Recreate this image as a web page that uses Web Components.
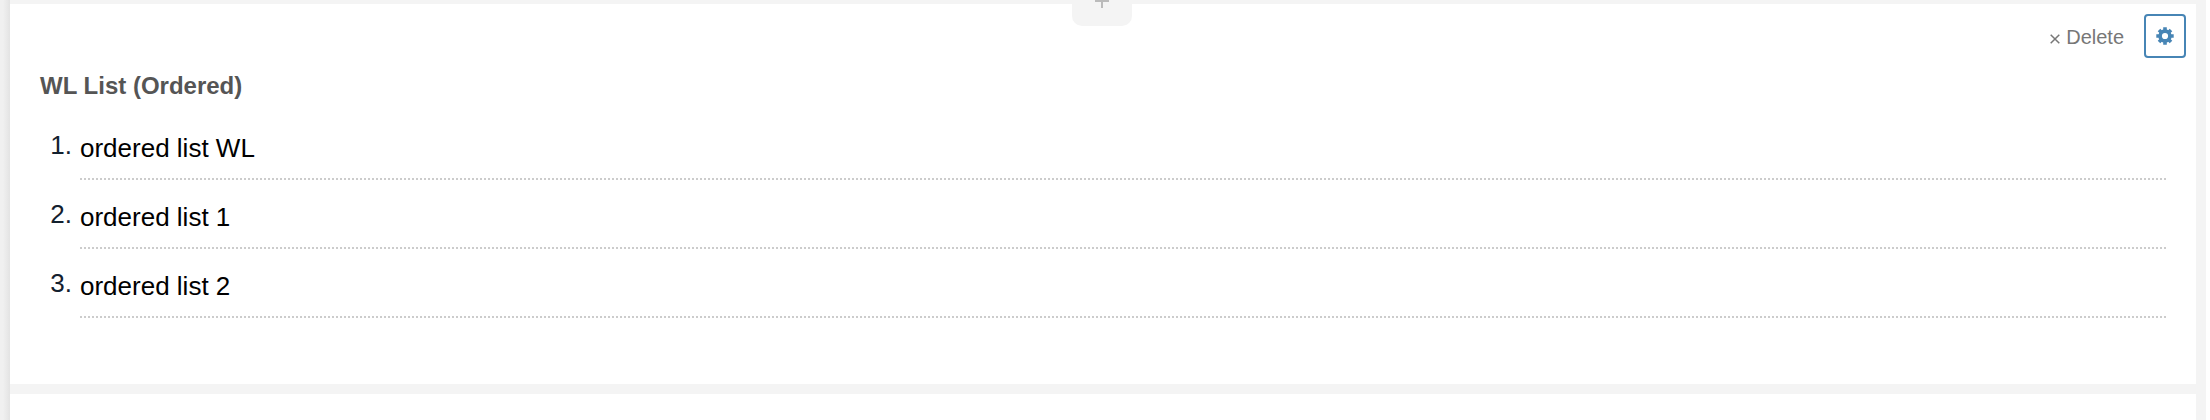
<!DOCTYPE html>
<html lang="en">
<head>
  <meta charset="utf-8">
  <title>WL List</title>
  <style>
    body {
      margin: 0;
      background-color: #fff;
      font-family: "Liberation Sans", Arial, sans-serif;
    }
  </style>
</head>
<body>
  <content-editor>
    <content-block>
      <block-actions slot="actions"></block-actions>
      <ordered-list-field label="WL List (Ordered)">
        <list-entry number="1" value="ordered list WL"></list-entry>
        <list-entry number="2" value="ordered list 1"></list-entry>
        <list-entry number="3" value="ordered list 2"></list-entry>
      </ordered-list-field>
    </content-block>
    <content-block></content-block>
  </content-editor>

  <script>
    class ContentEditor extends HTMLElement {
      static TAG = 'content-editor';

      constructor() {
        super();
        this.attachShadow({ mode: 'open' });
        this.shadowRoot.innerHTML = `
          <style>
            :host {
              display: flex;
              position: relative;
              height: 100vh;
              margin-right: 4px;
              overflow: hidden;
              background-color: #f4f4f4;
            }
            .rail {
              flex: none;
              width: 10px;
              background: linear-gradient(to right, #f0f0f0 30%, #e3e3e3);
            }
            main {
              flex: 1;
              display: flex;
              flex-direction: column;
              gap: 10px;
              padding: 4px 10px 0 0;
            }
            ::slotted(content-block:last-of-type) {
              flex: 1;
            }
            .add {
              position: absolute;
              top: -24px;
              left: calc(50% - 31px);
              display: flex;
              align-items: center;
              justify-content: center;
              width: 60px;
              height: 50px;
              padding: 0;
              border: 0;
              border-radius: 10px;
              background-color: #f4f4f4;
            }
          </style>
          <div class="rail"></div>
          <main><slot></slot></main>
          <button class="add" type="button" aria-label="Add block">
            <svg width="14" height="14" viewBox="0 0 14 14" stroke="#bbb" stroke-width="2">
              <path d="M0 7h14M7 0v14"/>
            </svg>
          </button>
        `;
      }
    }
    customElements.define(ContentEditor.TAG, ContentEditor);

    class ContentBlock extends HTMLElement {
      static TAG = 'content-block';

      constructor() {
        super();
        this.attachShadow({ mode: 'open' });
        this.shadowRoot.innerHTML = `
          <style>
            :host {
              display: block;
              padding: 10px 10px 57px 30px;
              background-color: #fff;
            }
            :host(:empty) {
              padding: 0;
            }
          </style>
          <slot name="actions"></slot>
          <slot></slot>
        `;
      }
    }
    customElements.define(ContentBlock.TAG, ContentBlock);

    class BlockActions extends HTMLElement {
      static TAG = 'block-actions';

      constructor() {
        super();
        this.attachShadow({ mode: 'open' });
        this.shadowRoot.innerHTML = `
          <style>
            :host {
              display: flex;
              align-items: center;
              justify-content: flex-end;
              gap: 20px;
            }
            button {
              display: flex;
              align-items: center;
              justify-content: center;
              box-sizing: border-box;
              padding: 0;
              border: 0;
              background: none;
              font: inherit;
            }
            .delete {
              gap: 6px;
              padding-top: 2px;
              color: #777;
              font-size: 20px;
              line-height: 24px;
            }
            .delete svg {
              margin-top: 4px;
            }
            .settings {
              width: 42px;
              height: 44px;
              border: 2px solid #4785b5;
              border-radius: 4px;
              color: #4785b5;
            }
          </style>
          <button class="delete" type="button">
            <svg width="10" height="10" viewBox="0 0 10 10" stroke="#777" stroke-width="1.5" aria-hidden="true">
              <path d="M.7.7l8.6 8.6M9.3.7L.7 9.3"/>
            </svg>
            Delete
          </button>
          <button class="settings" type="button" aria-label="Settings">
            <svg width="18" height="18" viewBox="-9 -9 18 18" fill="none" stroke="currentColor">
              <circle r="4.900" stroke-width="3.600"/>
              <path stroke-width="3.600" d="M0-8.700V-5M0 8.700V5M-8.700 0H-5M8.700 0H5"/>
              <path stroke-width="3.600" d="M-6-6l2.500 2.500M6-6L3.500-3.500M-6 6l2.500-2.500M6 6L3.500 3.500"/>
            </svg>
          </button>
        `;
      }
    }
    customElements.define(BlockActions.TAG, BlockActions);

    class OrderedListField extends HTMLElement {
      static TAG = 'ordered-list-field';

      constructor() {
        super();
        this.attachShadow({ mode: 'open' });
        this.shadowRoot.innerHTML = `
          <style>
            :host {
              display: block;
              padding: 14px 20px 0 0;
            }
            h2 {
              margin: 0 0 20px;
              color: #555;
              font-size: 24px;
              line-height: 28px;
            }
            .entries {
              display: flex;
              flex-direction: column;
            }
          </style>
          <h2></h2>
          <div class="entries" role="list"><slot></slot></div>
        `;
      }
      connectedCallback() {
        this.shadowRoot.querySelector('h2').textContent = this.getAttribute('label');
      }
    }
    customElements.define(OrderedListField.TAG, OrderedListField);

    class ListEntry extends HTMLElement {
      static TAG = 'list-entry';

      constructor() {
        super();
        this.attachShadow({ mode: 'open' });
        this.shadowRoot.innerHTML = `
          <style>
            :host {
              display: flex;
              align-items: flex-start;
              gap: 8px;
              height: 69px;
              font-size: 26px;
            }
            label {
              flex: none;
              width: 32px;
              padding-top: 10px;
              color: #13202e;
              line-height: 30px;
              text-align: right;
            }
            input {
              flex: 1;
              box-sizing: border-box;
              min-width: 0;
              height: 60px;
              padding: 0 0 2px;
              border: 0;
              border-bottom: 2px dotted #ccc;
              outline: 0;
              background: none;
              color: #000;
              font: inherit;
            }
          </style>
          <label for="entry"></label>
          <input id="entry" type="text">
        `;
      }
      connectedCallback() {
        this.setAttribute('role', 'listitem');
        this.shadowRoot.querySelector('label').textContent = `${this.getAttribute('number')}.`;
        this.shadowRoot.querySelector('input').value = this.getAttribute('value');
      }
    }
    customElements.define(ListEntry.TAG, ListEntry);
  </script>
</body>
</html>
